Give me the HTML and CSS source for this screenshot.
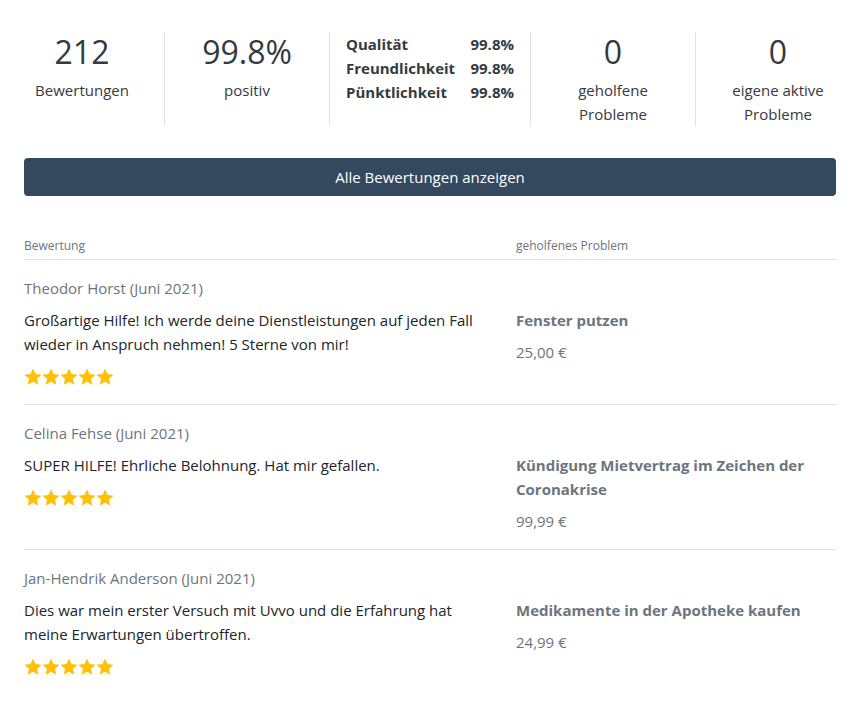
FILE: index.html
```html
<!DOCTYPE html>
<html lang="de">
<head>
<meta charset="utf-8">
<title>Bewertungen</title>
<link rel="stylesheet" href="styles.css">
</head>
<body>
<div class="stats">
  <div class="stat">
    <div class="num">212</div>
    <div class="label">Bewertungen</div>
  </div>
  <div class="stat">
    <div class="num">99.8%</div>
    <div class="label">positiv</div>
  </div>
  <div class="stat detail">
    <div class="drow"><span>Qualität</span><span>99.8%</span></div>
    <div class="drow"><span>Freundlichkeit</span><span>99.8%</span></div>
    <div class="drow"><span>Pünktlichkeit</span><span>99.8%</span></div>
  </div>
  <div class="stat">
    <div class="num">0</div>
    <div class="label">geholfene<br>Probleme</div>
  </div>
  <div class="stat">
    <div class="num">0</div>
    <div class="label">eigene aktive<br>Probleme</div>
  </div>
</div>

<div class="wrap">
  <button class="btn">Alle Bewertungen anzeigen</button>

  <div class="thead">
    <div>Bewertung</div>
    <div>geholfenes Problem</div>
  </div>

  <div class="review">
    <div class="name">Theodor Horst (Juni 2021)</div>
    <div class="cols">
      <div class="left">
        <p class="text">Großartige Hilfe! Ich werde deine Dienstleistungen auf jeden Fall wieder in Anspruch nehmen! 5 Sterne von mir!</p>
        <div class="stars">
          <svg viewBox="0 0 19 18"><path d="M9.5 .5L12.15 6.36 18.53 7.06 13.78 11.39 15.08 17.69 9.5 14.5 3.92 17.69 5.22 11.39 .47 7.06 6.85 6.36Z"/></svg>
          <svg viewBox="0 0 19 18"><path d="M9.5 .5L12.15 6.36 18.53 7.06 13.78 11.39 15.08 17.69 9.5 14.5 3.92 17.69 5.22 11.39 .47 7.06 6.85 6.36Z"/></svg>
          <svg viewBox="0 0 19 18"><path d="M9.5 .5L12.15 6.36 18.53 7.06 13.78 11.39 15.08 17.69 9.5 14.5 3.92 17.69 5.22 11.39 .47 7.06 6.85 6.36Z"/></svg>
          <svg viewBox="0 0 19 18"><path d="M9.5 .5L12.15 6.36 18.53 7.06 13.78 11.39 15.08 17.69 9.5 14.5 3.92 17.69 5.22 11.39 .47 7.06 6.85 6.36Z"/></svg>
          <svg viewBox="0 0 19 18"><path d="M9.5 .5L12.15 6.36 18.53 7.06 13.78 11.39 15.08 17.69 9.5 14.5 3.92 17.69 5.22 11.39 .47 7.06 6.85 6.36Z"/></svg>
        </div>
      </div>
      <div class="right">
        <div class="title">Fenster putzen</div>
        <div class="price">25,00 €</div>
      </div>
    </div>
  </div>

  <div class="review">
    <div class="name">Celina Fehse (Juni 2021)</div>
    <div class="cols">
      <div class="left">
        <p class="text">SUPER HILFE! Ehrliche Belohnung. Hat mir gefallen.</p>
        <div class="stars">
          <svg viewBox="0 0 19 18"><path d="M9.5 .5L12.15 6.36 18.53 7.06 13.78 11.39 15.08 17.69 9.5 14.5 3.92 17.69 5.22 11.39 .47 7.06 6.85 6.36Z"/></svg>
          <svg viewBox="0 0 19 18"><path d="M9.5 .5L12.15 6.36 18.53 7.06 13.78 11.39 15.08 17.69 9.5 14.5 3.92 17.69 5.22 11.39 .47 7.06 6.85 6.36Z"/></svg>
          <svg viewBox="0 0 19 18"><path d="M9.5 .5L12.15 6.36 18.53 7.06 13.78 11.39 15.08 17.69 9.5 14.5 3.92 17.69 5.22 11.39 .47 7.06 6.85 6.36Z"/></svg>
          <svg viewBox="0 0 19 18"><path d="M9.5 .5L12.15 6.36 18.53 7.06 13.78 11.39 15.08 17.69 9.5 14.5 3.92 17.69 5.22 11.39 .47 7.06 6.85 6.36Z"/></svg>
          <svg viewBox="0 0 19 18"><path d="M9.5 .5L12.15 6.36 18.53 7.06 13.78 11.39 15.08 17.69 9.5 14.5 3.92 17.69 5.22 11.39 .47 7.06 6.85 6.36Z"/></svg>
        </div>
      </div>
      <div class="right">
        <div class="title">Kündigung Mietvertrag im Zeichen der Coronakrise</div>
        <div class="price">99,99 €</div>
      </div>
    </div>
  </div>

  <div class="review">
    <div class="name">Jan-Hendrik Anderson (Juni 2021)</div>
    <div class="cols">
      <div class="left">
        <p class="text">Dies war mein erster Versuch mit Uvvo und die Erfahrung hat meine Erwartungen übertroffen.</p>
        <div class="stars">
          <svg viewBox="0 0 19 18"><path d="M9.5 .5L12.15 6.36 18.53 7.06 13.78 11.39 15.08 17.69 9.5 14.5 3.92 17.69 5.22 11.39 .47 7.06 6.85 6.36Z"/></svg>
          <svg viewBox="0 0 19 18"><path d="M9.5 .5L12.15 6.36 18.53 7.06 13.78 11.39 15.08 17.69 9.5 14.5 3.92 17.69 5.22 11.39 .47 7.06 6.85 6.36Z"/></svg>
          <svg viewBox="0 0 19 18"><path d="M9.5 .5L12.15 6.36 18.53 7.06 13.78 11.39 15.08 17.69 9.5 14.5 3.92 17.69 5.22 11.39 .47 7.06 6.85 6.36Z"/></svg>
          <svg viewBox="0 0 19 18"><path d="M9.5 .5L12.15 6.36 18.53 7.06 13.78 11.39 15.08 17.69 9.5 14.5 3.92 17.69 5.22 11.39 .47 7.06 6.85 6.36Z"/></svg>
          <svg viewBox="0 0 19 18"><path d="M9.5 .5L12.15 6.36 18.53 7.06 13.78 11.39 15.08 17.69 9.5 14.5 3.92 17.69 5.22 11.39 .47 7.06 6.85 6.36Z"/></svg>
        </div>
      </div>
      <div class="right">
        <div class="title">Medikamente in der Apotheke kaufen</div>
        <div class="price">24,99 €</div>
      </div>
    </div>
  </div>
</div>
</body>
</html>
```

FILE: styles.css
```css
* { box-sizing: border-box; }

body {
  margin: 0;
  background: #ffffff;
  font-family: "Open Sans", "Noto Sans", sans-serif;
  font-size: 15px;
  line-height: 24px;
  color: #212529;
}

.stats {
  display: grid;
  grid-template-columns: 164px 165px 201px 165px 165px;
  margin-top: 32px;
}

.stat {
  height: 94px;
  text-align: center;
  color: #343a40;
}

.stat + .stat {
  border-left: 1px solid #dee2e6;
}

.num {
  font-size: 32px;
  font-weight: 500;
  line-height: 40px;
  color: #343a40;
}

.label {
  margin-top: 6px;
  line-height: 24px;
}

.detail {
  padding: 0 16px;
  font-weight: 700;
  text-align: left;
}

.drow {
  display: flex;
  justify-content: space-between;
}

.wrap {
  padding: 32px 24px 0;
}

.btn {
  display: block;
  width: 100%;
  height: 38px;
  border: 0;
  border-radius: 4px;
  background: #34495e;
  color: #ffffff;
  font-family: inherit;
  font-size: 15px;
  cursor: pointer;
}

.thead {
  display: grid;
  grid-template-columns: 492px 1fr;
  margin-top: 41px;
  padding-bottom: 4px;
  font-size: 12px;
  line-height: 18px;
  color: #6c757d;
  border-bottom: 1px solid #dee2e6;
}

.review {
  padding: 16px 0 16px;
}

.review + .review {
  border-top: 1px solid #dee2e6;
}

.name {
  color: #6c757d;
}

.cols {
  display: grid;
  grid-template-columns: 492px 1fr;
  margin-top: 8px;
}

.left {
  padding-right: 24px;
}

.text {
  margin: 0;
}

.stars {
  display: flex;
  align-items: center;
  height: 24px;
  margin-top: 8px;
}

.stars svg {
  width: 18px;
  height: 17px;
  fill: #ffc107;
}

.title {
  font-weight: 700;
  color: #6c757d;
}

.price {
  margin-top: 8px;
  color: #6c757d;
}
```
